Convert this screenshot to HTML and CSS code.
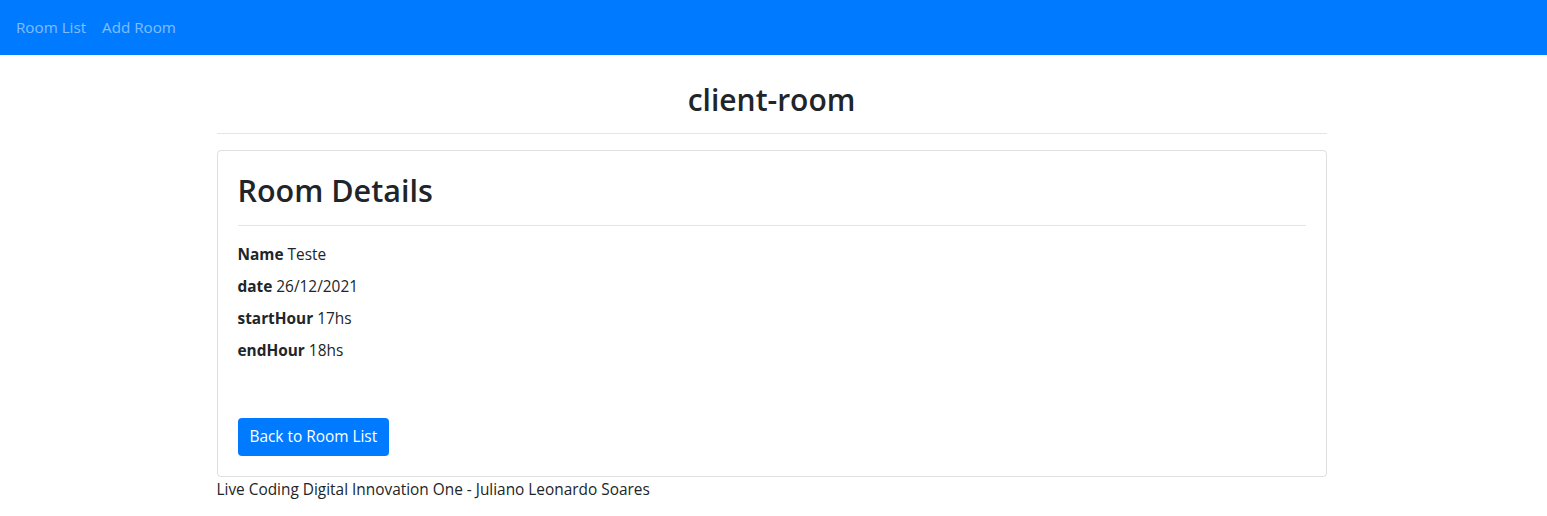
FILE: index.html
```html
<!DOCTYPE html>
<html lang="en">
<head>
<meta charset="utf-8">
<title>client-room</title>
<link rel="stylesheet" href="styles.css">
</head>
<body>
<nav class="navbar">
  <a class="nav-link" href="#">Room List</a>
  <a class="nav-link" href="#">Add Room</a>
</nav>
<main class="container">
  <h3 class="page-title">client-room</h3>
  <hr class="title-rule">
  <section class="card">
    <h1 class="card-title">Room Details</h1>
    <hr class="card-rule">
    <div class="fields">
      <p class="field"><b>Name</b> Teste</p>
      <p class="field"><b>date</b> 26/12/2021</p>
      <p class="field"><b>startHour</b> 17hs</p>
      <p class="field"><b>endHour</b> 18hs</p>
    </div>
    <div class="actions">
      <a class="btn" href="#">Back to Room List</a>
    </div>
  </section>
  <footer class="footer">Live Coding Digital Innovation One - Juliano Leonardo Soares</footer>
</main>
</body>
</html>
```

FILE: styles.css
```css
* { box-sizing: border-box; }
html, body { margin: 0; padding: 0; }
body {
  font-family: "Open Sans", "Noto Sans", "Liberation Sans", sans-serif;
  font-size: 15.4px;
  line-height: 24px;
  color: #212529;
  background: #fff;
}
.navbar {
  height: 55px;
  background: #007bff;
  display: flex;
  align-items: center;
  gap: 16px;
  padding: 0 16px 2px;
}
.nav-link {
  color: rgba(255, 255, 255, 0.5);
  text-decoration: none;
  font-size: 15.2px;
}
.container {
  width: 1114px;
  padding-right: 4px;
  margin: 0 auto;
}
.page-title {
  margin: 0;
  padding-top: 27px;
  height: 78px;
  text-align: center;
  font-size: 30px;
  font-weight: 600;
  line-height: 36px;
}
.title-rule {
  margin: 0 0 16px;
  border: 0;
  border-top: 1px solid rgba(0, 0, 0, 0.1);
}
.card {
  border: 1px solid rgba(0, 0, 0, 0.125);
  border-radius: 4px;
  padding: 20px;
}
.card-title {
  margin: 0;
  font-size: 30.5px;
  font-weight: 600;
  line-height: 38px;
  height: 54px;
}
.card-rule {
  margin: 0 0 17px;
  border: 0;
  border-top: 1px solid rgba(0, 0, 0, 0.1);
}
.fields {
  display: flex;
  flex-direction: column;
  gap: 8px;
}
.field { margin: 0; }
.field b { font-weight: 700; }
.actions { padding-top: 55px; }
.btn {
  display: inline-block;
  background: #007bff;
  color: #fff;
  text-decoration: none;
  border-radius: 4px;
  padding: 7px 12px;
  line-height: 24px;
}
.footer {
  padding-top: 1px;
  line-height: 24px;
}
```
